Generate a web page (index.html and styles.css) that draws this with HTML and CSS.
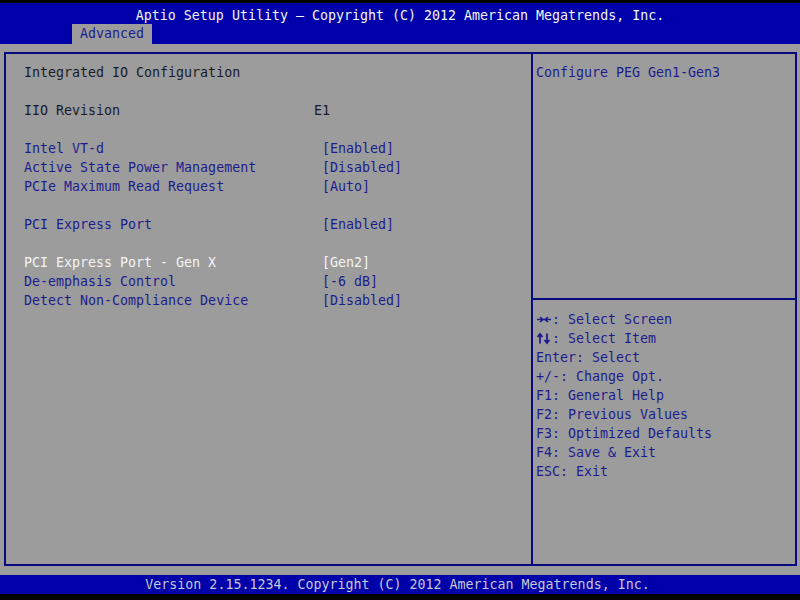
FILE: index.html
```html
<!DOCTYPE html>
<html>
<head>
<meta charset="utf-8">
<link rel="stylesheet" href="styles.css">
</head>
<body>
<div class="screen">
  <div class="header">
    <div class="title">Aptio Setup Utility – Copyright (C) 2012 American Megatrends, Inc.</div>
    <div class="tabs"><div class="tab">Advanced</div></div>
  </div>
  <div class="main">
    <div class="box">
      <div class="left">
        <div class="row"><span class="label">Integrated IO Configuration</span></div>
        <div class="row"></div>
        <div class="row"><span class="label">IIO Revision</span><span class="info">E1</span></div>
        <div class="row"></div>
        <div class="row item"><span class="label">Intel VT-d</span><span class="opt">[Enabled]</span></div>
        <div class="row item"><span class="label">Active State Power Management</span><span class="opt">[Disabled]</span></div>
        <div class="row item"><span class="label">PCIe Maximum Read Request</span><span class="opt">[Auto]</span></div>
        <div class="row"></div>
        <div class="row item"><span class="label">PCI Express Port</span><span class="opt">[Enabled]</span></div>
        <div class="row"></div>
        <div class="row item selected"><span class="label">PCI Express Port - Gen X</span><span class="opt">[Gen2]</span></div>
        <div class="row item"><span class="label">De-emphasis Control</span><span class="opt">[-6 dB]</span></div>
        <div class="row item"><span class="label">Detect Non-Compliance Device</span><span class="opt">[Disabled]</span></div>
      </div>
      <div class="right">
        <div class="help">
          <div class="row">Configure PEG Gen1-Gen3</div>
        </div>
        <div class="keys">
          <div class="row"><svg class="arr" width="16" height="19" viewBox="0 0 16 19"><path d="M1 9.5H15M4 7L7 9.5L4 12M12 7L9 9.5L12 12" fill="none" stroke="#1c1c8e" stroke-width="1.6"/></svg>: Select Screen</div>
          <div class="row"><svg class="arr" width="16" height="19" viewBox="0 0 16 19"><path d="M4 5V14.5M1.5 8L4 5L6.5 8M11 4.5V14M8.5 11L11 14L13.5 11" fill="none" stroke="#1c1c8e" stroke-width="1.8"/></svg>: Select Item</div>
          <div class="row">Enter: Select</div>
          <div class="row">+/-: Change Opt.</div>
          <div class="row">F1: General Help</div>
          <div class="row">F2: Previous Values</div>
          <div class="row">F3: Optimized Defaults</div>
          <div class="row">F4: Save &amp; Exit</div>
          <div class="row">ESC: Exit</div>
        </div>
      </div>
    </div>
  </div>
  <div class="footer">Version 2.15.1234. Copyright (C) 2012 American Megatrends, Inc.</div>
</div>
</body>
</html>
```

FILE: styles.css
```css
html, body {
  margin: 0;
  padding: 0;
  background: #000;
}
.screen {
  width: 800px;
  height: 600px;
  background: #000;
  padding-top: 3px;
  padding-bottom: 6px;
  box-sizing: border-box;
  display: flex;
  flex-direction: column;
  font-family: "DejaVu Sans Mono", "Liberation Mono", monospace;
  font-size: 13.3px;
  color: #1c1c8e;
  white-space: nowrap;
}
.header {
  background: #0000aa;
  height: 41px;
  display: flex;
  flex-direction: column;
}
.title {
  color: #f4f4f4;
  text-align: center;
  padding-top: 4px;
  height: 17px;
  line-height: 17px;
}
.tabs {
  display: flex;
  padding-left: 72px;
}
.tab {
  background: #9c9c9c;
  color: #1c1c8e;
  height: 20px;
  line-height: 20px;
  padding: 0 8px;
}
.main {
  flex: 1;
  min-height: 0;
  background: #9c9c9c;
  padding: 8px 3px 9px 4px;
  display: flex;
}
.box {
  flex: 1;
  border: 2px solid #0a0a80;
  display: flex;
}
.left {
  width: 525px;
  padding: 9px 0 0 18px;
  box-sizing: border-box;
}
.row {
  height: 19px;
  line-height: 19px;
  display: flex;
}
.label {
  width: 290px;
  flex-shrink: 0;
}
.info {
  color: #1a1a2a;
}
.left .row .label { color: #1a1a2a; }
.left .item .label { color: #1c1c8e; }
.opt {
  padding-left: 8px;
  color: #1c1c8e;
}
.left .selected .label,
.left .selected .opt {
  color: #f4f4f4;
}
.right {
  flex: 1;
  border-left: 2px solid #0a0a80;
  display: flex;
  flex-direction: column;
}
.help {
  height: 246px;
  padding: 9px 0 0 3px;
  box-sizing: border-box;
  border-bottom: 2px solid #0a0a80;
}
.keys {
  padding: 10px 0 0 3px;
}
.arr {
  display: block;
  flex-shrink: 0;
}
.footer {
  background: #0000aa;
  color: #c8c8d8;
  height: 19px;
  line-height: 19px;
  text-align: center;
  padding-right: 5px;
}
```
